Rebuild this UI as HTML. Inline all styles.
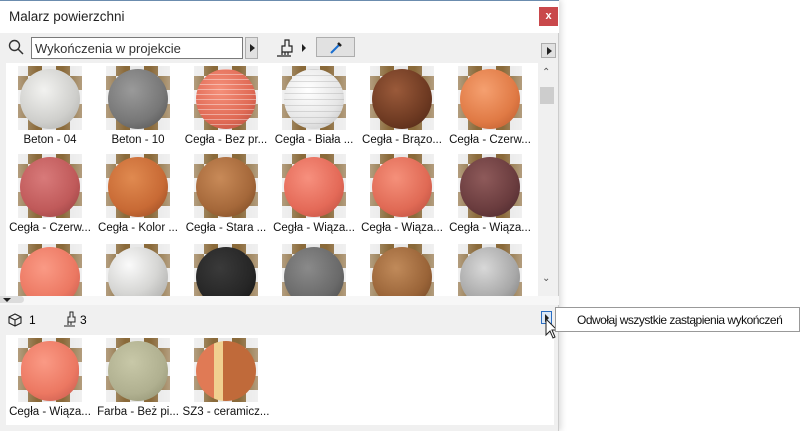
<!DOCTYPE html>
<html><head><meta charset="utf-8"><style>
*{margin:0;padding:0;box-sizing:border-box}
body{width:801px;height:431px;background:#fff;font-family:"Liberation Sans","DejaVu Sans",sans-serif;position:relative;overflow:hidden}
.win{position:absolute;left:0;top:0;width:559px;height:431px;background:#f0f0f0;border-right:1px solid #ccc;box-shadow:2px 0 6px rgba(0,0,0,.15)}
.title{position:absolute;left:0;top:0;width:559px;height:33px;background:#fff;border-top:1px solid #6b8cae;font-size:13.5px;color:#222;padding:8px 0 0 9px}
.close{position:absolute;left:539px;top:7px;width:19px;height:19px;background:#c9484b;color:#fff;font-size:11px;font-weight:bold;text-align:center;line-height:18px}
.search{position:absolute;left:31px;top:37px;width:212px;height:22px;border:1px solid #7a7a7a;background:#fff;font-size:13px;color:#333;padding:3px 0 0 3px}
.btn{position:absolute;background:#e1e1e1;border:1px solid #adadad}
.grid{position:absolute;left:6px;top:63px;width:532px;height:233px;background:#fff;overflow:hidden}
.cell{position:absolute;width:88px;text-align:center;font-size:11.5px;color:#111}
.th{width:64px;height:64px;margin:0 auto;position:relative;background:
 repeating-conic-gradient(#8a6a3a 0 25%,#e8e8e8 0 50%) -4px -4px/28px 28px;overflow:hidden}
.th::before{content:"";position:absolute;left:0;top:0;width:100%;height:100%;background:linear-gradient(90deg,rgba(255,255,255,.35),rgba(255,255,255,0) 30%,rgba(255,255,255,0) 70%,rgba(255,255,255,.35))}
.sp{position:absolute;left:2px;top:3px;width:60px;height:60px;border-radius:50%}
.lbl{margin-top:4px;white-space:nowrap}
.sb{position:absolute;left:538px;top:63px;width:18px;height:233px;background:#f0f0f0}
.tip{position:absolute;left:555px;top:307px;width:245px;height:25px;background:#fff;border:1px solid #999;font-size:12px;letter-spacing:-0.5px;padding:5px 0 0 21px;color:#111;white-space:nowrap;overflow:hidden}
</style></head><body>
<div class="win">
<div class="title">Malarz powierzchni</div>
<div class="close">x</div>
<svg style="position:absolute;left:8px;top:39px" width="16" height="16"><circle cx="6.5" cy="6.5" r="5" fill="none" stroke="#333" stroke-width="1.4"/><line x1="10" y1="10" x2="15" y2="15" stroke="#333" stroke-width="1.5"/></svg>
<div class="search">Wykończenia w projekcie</div>
<div class="btn" style="left:245px;top:37px;width:13px;height:22px"><div style="margin:6px 0 0 4px;border-left:5px solid #222;border-top:4px solid transparent;border-bottom:4px solid transparent;width:0"></div></div>
<svg style="position:absolute;left:276px;top:38px" width="22" height="20"><path d="M9 2h4v6h3v6H6V8h3z" fill="none" stroke="#222" stroke-width="1.2"/><path d="M1 18h14M6 14v3M9 14v3M12 14v3" stroke="#222" stroke-width="1.2"/></svg>
<div style="position:absolute;left:302px;top:44px;border-left:4px solid #222;border-top:4px solid transparent;border-bottom:4px solid transparent"></div>
<div class="btn" style="left:316px;top:37px;width:39px;height:20px"><svg style="margin:2px 0 0 11px" width="16" height="14"><path d="M3 13l8-8" stroke="#1b6fd0" stroke-width="2"/><path d="M10 3l3 3" stroke="#222" stroke-width="2.5"/></svg></div>
<div class="btn" style="left:541px;top:43px;width:15px;height:15px"><div style="margin:3px 0 0 5px;border-left:5px solid #222;border-top:4px solid transparent;border-bottom:4px solid transparent;width:0"></div></div>
<div class="grid">
<div class="cell" style="left:0;top:3px"><div class="th"><div class="sp" style="background:radial-gradient(circle at 40% 35%,#f2f2f0,#cfcfcc 60%,#a9a9a6)"></div></div><div class="lbl">Beton - 04</div></div>
<div class="cell" style="left:88px;top:3px"><div class="th"><div class="sp" style="background:radial-gradient(circle at 40% 35%,#9a9a9a,#777 60%,#4c4c4c)"></div></div><div class="lbl">Beton - 10</div></div>
<div class="cell" style="left:176px;top:3px"><div class="th"><div class="sp" style="background:repeating-linear-gradient(0deg,transparent 0 4px,rgba(255,255,255,.4) 4px 5px),radial-gradient(circle at 40% 35%,#f5907a,#e06a55 60%,#b0483a)"></div></div><div class="lbl">Cegła - Bez pr...</div></div>
<div class="cell" style="left:264px;top:3px"><div class="th"><div class="sp" style="background:repeating-linear-gradient(0deg,transparent 0 5px,rgba(150,150,150,.3) 5px 6px),radial-gradient(circle at 40% 35%,#fff,#e6e6e6 60%,#bdbdbd)"></div></div><div class="lbl">Cegła - Biała ...</div></div>
<div class="cell" style="left:352px;top:3px"><div class="th"><div class="sp" style="background:radial-gradient(circle at 40% 35%,#9a5a3a,#6e3a22 60%,#4a2414)"></div></div><div class="lbl">Cegła - Brązo...</div></div>
<div class="cell" style="left:440px;top:3px"><div class="th"><div class="sp" style="background:radial-gradient(circle at 40% 35%,#f5a070,#e07a45 60%,#b5552a)"></div></div><div class="lbl">Cegła - Czerw...</div></div>
<div class="cell" style="left:0;top:91px"><div class="th"><div class="sp" style="background:radial-gradient(circle at 40% 35%,#d87a7a,#c05a5a 60%,#8e3c3c)"></div></div><div class="lbl">Cegła - Czerw...</div></div>
<div class="cell" style="left:88px;top:91px"><div class="th"><div class="sp" style="background:radial-gradient(circle at 40% 35%,#e08a50,#c86a35 60%,#8e4420)"></div></div><div class="lbl">Cegła - Kolor ...</div></div>
<div class="cell" style="left:176px;top:91px"><div class="th"><div class="sp" style="background:radial-gradient(circle at 40% 35%,#c88a58,#a5683a 60%,#74441f)"></div></div><div class="lbl">Cegła - Stara ...</div></div>
<div class="cell" style="left:264px;top:91px"><div class="th"><div class="sp" style="background:radial-gradient(circle at 40% 35%,#f7907e,#e46a58 60%,#b54a3c)"></div></div><div class="lbl">Cegła - Wiąza...</div></div>
<div class="cell" style="left:352px;top:91px"><div class="th"><div class="sp" style="background:radial-gradient(circle at 40% 35%,#f5907a,#e06a55 60%,#b0483a)"></div></div><div class="lbl">Cegła - Wiąza...</div></div>
<div class="cell" style="left:440px;top:91px"><div class="th"><div class="sp" style="background:radial-gradient(circle at 40% 35%,#8e5a5a,#6a3c3e 60%,#44242a)"></div></div><div class="lbl">Cegła - Wiąza...</div></div>
<div class="cell" style="left:0;top:181px"><div class="th"><div class="sp" style="background:radial-gradient(circle at 40% 35%,#fa9a85,#ec7862 60%,#c0554a)"></div></div></div>
<div class="cell" style="left:88px;top:181px"><div class="th"><div class="sp" style="background:radial-gradient(circle at 35% 30%,#fafafa,#d6d6d4 50%,#a0a09e)"></div></div></div>
<div class="cell" style="left:176px;top:181px"><div class="th"><div class="sp" style="background:radial-gradient(circle at 40% 35%,#3a3a3a,#262626 60%,#111)"></div></div></div>
<div class="cell" style="left:264px;top:181px"><div class="th"><div class="sp" style="background:radial-gradient(circle at 40% 35%,#8a8a8a,#6a6a6a 60%,#444)"></div></div></div>
<div class="cell" style="left:352px;top:181px"><div class="th"><div class="sp" style="background:radial-gradient(circle at 40% 35%,#c08a5a,#9a6438 60%,#6a4020)"></div></div></div>
<div class="cell" style="left:440px;top:181px"><div class="th"><div class="sp" style="background:radial-gradient(circle at 40% 35%,#d8d8d8,#a8a8a8 60%,#777)"></div></div></div>
</div>
<div class="sb"><div style="position:absolute;left:4px;top:4px;font-size:10px;color:#555">&#8963;</div><div style="position:absolute;left:2px;top:24px;width:14px;height:17px;background:#cdcdcd"></div><div style="position:absolute;left:4px;top:210px;font-size:10px;color:#555">&#8964;</div></div>
<div style="position:absolute;left:0;top:296px;width:559px;height:9px;background:#f7f7f7"></div>
<div style="position:absolute;left:0;top:296px;width:24px;height:7px;background:#dcdcdc;border-radius:0 4px 4px 0"></div>
<div style="position:absolute;left:3px;top:298px;border-top:4px solid #222;border-left:4px solid transparent;border-right:4px solid transparent"></div>
<svg style="position:absolute;left:8px;top:313px" width="14" height="14"><path d="M7 1l6 3v6l-6 3-6-3V4zM1 4l6 3 6-3M7 7v6" fill="none" stroke="#222" stroke-width="1.1"/></svg>
<div style="position:absolute;left:29px;top:313px;font-size:12px">1</div>
<svg style="position:absolute;left:63px;top:311px" width="16" height="16"><path d="M7 1h3v5h2v5H5V6h2z" fill="none" stroke="#222" stroke-width="1"/><path d="M1 15h11M5 11v3M8 11v3" stroke="#222" stroke-width="1"/></svg>
<div style="position:absolute;left:80px;top:313px;font-size:12px">3</div>
<div style="position:absolute;left:541px;top:311px;width:11px;height:13px;border:1px solid #2a6dc2;background:#dbe8f7"><div style="margin:2px 0 0 3px;border-left:4px solid #222;border-top:4px solid transparent;border-bottom:4px solid transparent;width:0"></div></div>
<div style="position:absolute;left:6px;top:335px;width:548px;height:90px;background:#fff"></div>
<div class="cell" style="left:6px;top:338px"><div class="th"><div class="sp" style="left:3px;width:58px;border-radius:50%/46%;background:radial-gradient(circle at 40% 35%,#fa9a85,#ec7862 60%,#c0554a)"></div></div><div class="lbl">Cegła - Wiąza...</div></div>
<div class="cell" style="left:94px;top:338px"><div class="th"><div class="sp" style="background:radial-gradient(circle at 40% 35%,#c8c8a8,#b0b090 60%,#8a8a6a)"></div></div><div class="lbl">Farba - Beż pi...</div></div>
<div class="cell" style="left:182px;top:338px"><div class="th"><div class="sp" style="background:linear-gradient(90deg,#e07a55 0 30%,#f0d090 30% 45%,#c06a3a 45%)"></div></div><div class="lbl">SZ3 - ceramicz...</div></div>
</div>
<svg style="position:absolute;left:545px;top:318px" width="14" height="22"><path d="M1 1v16l4-4 3 7 2-1-3-7h5z" fill="#fff" stroke="#222" stroke-width="1"/></svg>
<div class="tip">Odwołaj wszystkie zastąpienia wykończeń</div>
</body></html>
